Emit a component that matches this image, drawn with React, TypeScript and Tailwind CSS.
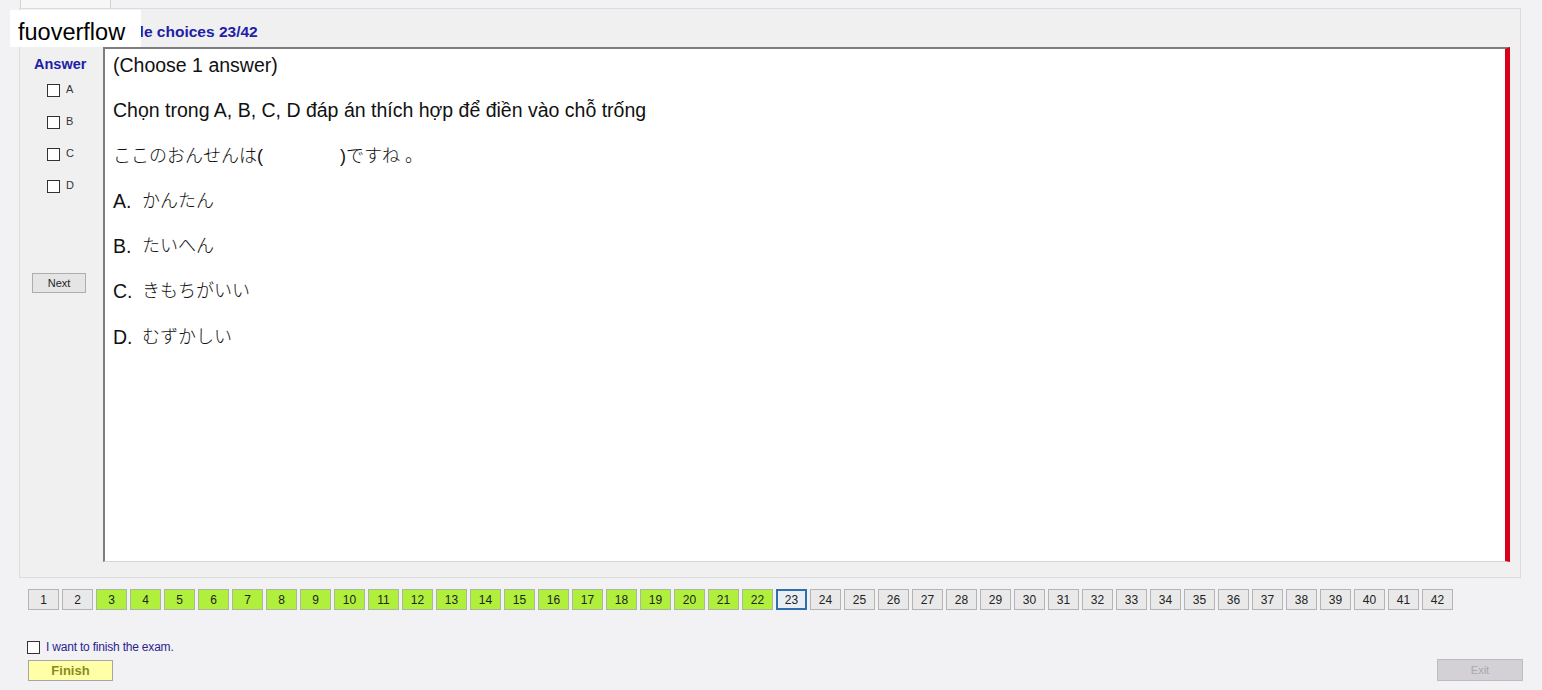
import React from 'react';

const answered = new Set([3, 4, 5, 6, 7, 8, 9, 10, 11, 12, 13, 14, 15, 16, 17, 18, 19, 20, 21, 22]);
const current = 23;
const total = 42;

const options = [
  { key: 'A', text: 'かんたん' },
  { key: 'B', text: 'たいへん' },
  { key: 'C', text: 'きもちがいい' },
  { key: 'D', text: 'むずかしい' },
];

function Box() {
  return <span className="inline-block w-[13px] h-[13px] border border-[#333] bg-white shrink-0" />;
}

function QuestionButton({ n }: { n: number }) {
  const isCurrent = n === current;
  const isDone = answered.has(n);
  return (
    <div
      className={`w-[31px] h-[21px] flex items-center justify-center text-[12px] text-[#222] shrink-0 ${
        isCurrent
          ? 'border-2 border-[#2f6fae] bg-[#e8eef4]'
          : isDone
          ? 'border border-[#a9b7a0] bg-[#b0f03c]'
          : 'border border-[#b4b4b4] bg-[#e9e9e9]'
      }`}
    >
      {n}
    </div>
  );
}

export default function App() {
  const jp = "font-['Liberation_Sans','Noto_Sans_CJK_JP',sans-serif]";
  return (
    <div className="relative w-[1542px] h-[690px] overflow-hidden bg-[#f2f1f4] font-['Liberation_Sans',sans-serif]">
      {/* tab header */}
      <div className="ml-[20px] w-[91px] h-[8px] border-x border-[#d2d2d2] bg-[#f7f7f7]" />

      {/* main panel */}
      <div className="ml-[19px] w-[1502px] h-[570px] border border-[#dcdcdc] bg-[#f0f0f0] flex">
        {/* answer column */}
        <div className="w-[83px] shrink-0 flex flex-col pt-[47px]">
          <div className="pl-[14px] text-[14.5px] leading-[16px] font-bold text-[#2121a8]">Answer</div>
          <div className="mt-[2px] flex flex-col">
            {options.map((o) => (
              <div key={o.key} className="h-[32px] flex items-center pl-[27px] gap-[6px]">
                <Box />
                <span className="text-[11px] text-[#333] -mt-[2px]">{o.key}</span>
              </div>
            ))}
          </div>
          <div className="mt-[71px] ml-[12px] w-[54px] h-[20px] border border-[#adadad] bg-[#e5e5e5] flex items-center justify-center text-[11px] text-[#222]">
            Next
          </div>
        </div>

        {/* question column */}
        <div className="flex flex-col">
          <div className="h-[38px] pt-[15px] -ml-[9px] text-[15.5px] leading-[16px] font-bold text-[#2121a8]">
            Multiple choices 23/42
          </div>
          <div className="w-[1407px] h-[515px] bg-white border-t-2 border-l-2 border-[#7d7d7d] border-r-[5px] border-r-[#d8001a] border-b border-b-[#d6d6d6] pl-[8px] pt-[5px] flex flex-col gap-[23.3px] text-[19.5px] leading-[22px] text-[#111]">
            <div>(Choose 1 answer)</div>
            <div>Chọn trong A, B, C, D đáp án thích hợp để điền vào chỗ trống</div>
            <div className={`${jp} text-[18px] font-light whitespace-pre`}>ここのおんせんは(　　　　 )ですね 。</div>
            {options.map((o) => (
              <div key={o.key} className="flex items-center">
                <span className="w-[29px]">{o.key}.</span>
                <span className={`${jp} text-[18px] font-light`}>{o.text}</span>
              </div>
            ))}
          </div>
        </div>
      </div>

      {/* question navigator */}
      <div className="mt-[11px] ml-[28px] flex gap-[3px]">
        {Array.from({ length: total }, (_, i) => (
          <QuestionButton key={i + 1} n={i + 1} />
        ))}
      </div>

      {/* finish / exit */}
      <div className="mt-[29px] pl-[27px] pr-[19px] flex items-end justify-between">
        <div className="flex flex-col">
          <div className="h-[16px] flex items-center gap-[6px]">
            <Box />
            <span className="text-[12px] text-[#2b1f8f] tracking-[-0.2px]">I want to finish the exam.</span>
          </div>
          <div className="mt-[5px] ml-[1px] w-[85px] h-[21px] border border-[#a6a6a6] bg-[#ffffa8] flex items-center justify-center text-[13px] font-bold text-[#8a8a1c]">
            Finish
          </div>
        </div>
        <div className="w-[86px] h-[22px] border border-[#bdbdbd] bg-[#d3d1d5] flex items-center justify-center text-[11px] text-[#a9a9a9]">
          Exit
        </div>
      </div>

      {/* watermark */}
      <div className="absolute left-[10px] top-[10px] w-[131px] h-[37px] bg-white pl-[8px] pt-[8px] text-[23.5px] leading-[28px] text-black">
        fuoverflow
      </div>
    </div>
  );
}
